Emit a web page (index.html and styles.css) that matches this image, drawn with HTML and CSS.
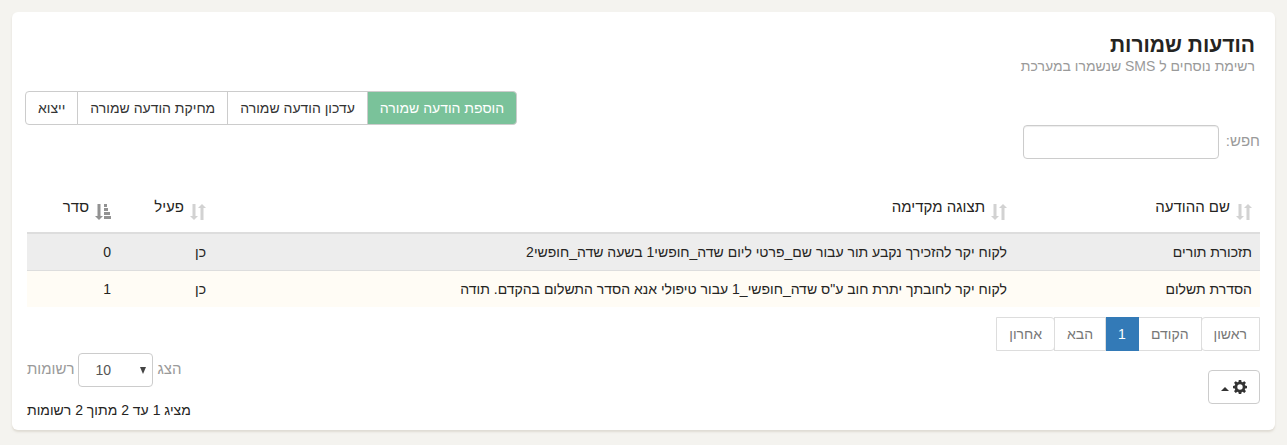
FILE: index.html
```html
<!DOCTYPE html>
<html lang="he" dir="rtl">
<head>
<meta charset="utf-8">
<title>הודעות שמורות</title>
<link rel="stylesheet" href="styles.css">
</head>
<body>
<svg class="sprite" aria-hidden="true">
  <symbol id="sort" viewBox="0 0 16 16"><path d="M2.500 0h3v12h2.500L4 16 0 12h2.500zM10.500 16h3V4H16l-4-4-4 4h2.500z"/></symbol>
  <symbol id="sort-asc" viewBox="0 0 16 16"><path d="M2.500 0h3v12h2.500L4 16 0 12h2.500zM9 0h3v3H9zM9 4h4v3H9zM9 8h6v3H9zM9 12h7v3H9z"/></symbol>
</svg>
<main class="card">
  <header class="card-header">
    <h1 class="title">הודעות שמורות</h1>
    <p class="subtitle">רשימת נוסחים ל SMS שנשמרו במערכת</p>
  </header>
  <div class="toolbar">
    <button type="button" class="btn btn-primary">הוספת הודעה שמורה</button>
    <button type="button" class="btn">עדכון הודעה שמורה</button>
    <button type="button" class="btn">מחיקת הודעה שמורה</button>
    <button type="button" class="btn">ייצוא</button>
  </div>
  <div class="search">
    <label class="label" for="search">חפש:</label>
    <input class="field" id="search" type="search">
  </div>
  <table class="table">
    <thead>
      <tr>
        <th class="col-name"><span class="heading"><svg class="sort"><use href="#sort"/></svg>שם ההודעה</span></th>
        <th class="col-preview"><span class="heading"><svg class="sort"><use href="#sort"/></svg>תצוגה מקדימה</span></th>
        <th class="col-active"><span class="heading"><svg class="sort"><use href="#sort"/></svg>פעיל</span></th>
        <th class="col-order"><span class="heading"><svg class="sort sort-on"><use href="#sort-asc"/></svg>סדר</span></th>
      </tr>
    </thead>
    <tbody>
      <tr class="row-odd"><td>תזכורת תורים</td><td>לקוח יקר להזכירך נקבע תור עבור שם_פרטי ליום שדה_חופשי1 בשעה שדה_חופשי2</td><td>כן</td><td>0</td></tr>
      <tr class="row-even"><td>הסדרת תשלום</td><td>לקוח יקר לחובתך יתרת חוב ע"ס שדה_חופשי_1 עבור טיפולי אנא הסדר התשלום בהקדם. תודה</td><td>כן</td><td>1</td></tr>
    </tbody>
  </table>
  <footer class="card-footer">
    <div class="footer-start">
      <nav class="pages">
        <a class="page page-first" href="#">ראשון</a>
        <a class="page" href="#">הקודם</a>
        <a class="page page-current" href="#">1</a>
        <a class="page" href="#">הבא</a>
        <a class="page page-last" href="#">אחרון</a>
      </nav>
      <button type="button" class="btn btn-settings" aria-label="הגדרות">
        <svg class="gear" viewBox="0 0 14 14"><path fill-rule="evenodd" d="M5.800 0h2.400l.4 1.900 1 .4 1.700-1.100 1.600 1.600-1.100 1.700.4 1 1.800.4v2.300l-1.800.4-.4 1 1.100 1.700-1.600 1.600-1.700-1.100-1 .4-.4 1.800H5.800l-.4-1.800-1-.4-1.700 1.100-1.600-1.600 1.100-1.700-.4-1L0 8.200V5.900l1.800-.4.4-1-1.100-1.700 1.600-1.600 1.700 1.100 1-.4zM7 4.300a2.700 2.700 0 1 0 0 5.400 2.700 2.700 0 0 0 0-5.400z"/></svg>
        <span class="caret"></span>
      </button>
    </div>
    <div class="footer-end">
      <div class="length">
        <label class="label" for="length">הצג</label>
        <span class="select-wrap"><select class="select" id="length"><option>10</option></select><svg class="arrow" viewBox="0 0 6 7"><path d="M0 0h6L3 7z"/></svg></span>
        <span class="label">רשומות</span>
      </div>
      <p class="info">מציג 1 עד 2 מתוך 2 רשומות</p>
    </div>
  </footer>
</main>
</body>
</html>
```
FILE: styles.css
```css
* { box-sizing: border-box; }
body { margin: 0; padding: 12px; background: #f4f3ef; color: #252422; font: 14px/20px "Liberation Sans", Arial, sans-serif; }
.sprite { position: absolute; width: 0; height: 0; }
.card { padding: 20px 15px 10px; background: #fff; border-radius: 6px; box-shadow: 0 2px 2px rgba(204, 197, 185, .5); }
.card-header { padding: 0 5px; }
.title { margin: 0; font-size: 21px; line-height: 26px; }
.subtitle { margin: 0; color: #9a9a9a; line-height: 16px; }
.toolbar { display: flex; justify-content: flex-end; margin: 17px 0 0 -2px; }
.btn { height: 34px; padding: 0 12px; border: 1px solid #ccc; background: #fff; color: #333; font: inherit; }
.toolbar .btn + .btn { margin-right: -1px; }
.toolbar .btn:first-child { border-radius: 0 4px 4px 0; }
.toolbar .btn:last-child { border-radius: 4px 0 0 4px; }
.toolbar .btn-primary { background: #7ac29a; color: #fff; }
.search { display: flex; gap: 7px; }
.label { color: #9a9a9a; font-size: 15px; line-height: 32px; }
.field { width: 196px; height: 34px; padding: 6px 12px; border: 1px solid #ccc; border-radius: 4px; background: #fff; box-shadow: inset 0 1px 1px rgba(0, 0, 0, .075); font: inherit; appearance: none; }
.table { width: 100%; margin-top: 30px; border-collapse: collapse; table-layout: fixed; }
.table th { height: 44px; padding: 8px; border-bottom: 2px solid #ddd; text-align: right; font-size: 15px; font-weight: normal; vertical-align: top; }
.table td { padding: 8px; border-top: 1px solid #ddd; }
.col-name { width: 245px; }
.col-active { width: 95px; }
.col-order { width: 92px; }
.heading { display: flex; gap: 6px; }
.sort { width: 16px; height: 16px; margin-top: 7px; fill: #d2d2d2; }
.sort-on { fill: #929292; }
.row-odd { background: #ededed; }
.row-even { background: #fffcf5; }
.card-footer { display: flex; justify-content: space-between; padding-top: 10px; }
.footer-start { display: flex; flex-direction: column; align-items: flex-start; gap: 19px; }
.pages { display: flex; }
.page { padding: 6px 12px; border: 1px solid #ddd; color: #777; text-decoration: none; }
.page + .page { margin-right: -1px; }
.page-first { border-radius: 4px 0 0 4px; }
.page-last { border-radius: 0 4px 4px 0; }
.page-current { border-color: #337ab7; background: #337ab7; color: #fff; }
.btn-settings { display: flex; align-items: center; gap: 4px; border-radius: 4px; }
.gear { width: 14px; height: 14px; fill: #333; }
.caret { margin-top: 4px; border: 4px solid transparent; border-top: 0; border-bottom-color: #333; }
.footer-end { display: flex; flex-direction: column; align-items: flex-end; gap: 13px; padding-top: 36px; }
.length { display: flex; gap: 4px; }
.select-wrap { position: relative; }
.select { width: 75px; height: 34px; padding: 0 16px; border: 1px solid #ccc; border-radius: 4px; background: #fff; color: #555; font: inherit; direction: ltr; appearance: none; }
.arrow { position: absolute; top: 14px; right: 7px; width: 6px; height: 7px; fill: #444; }
.info { margin: 0; }
```
